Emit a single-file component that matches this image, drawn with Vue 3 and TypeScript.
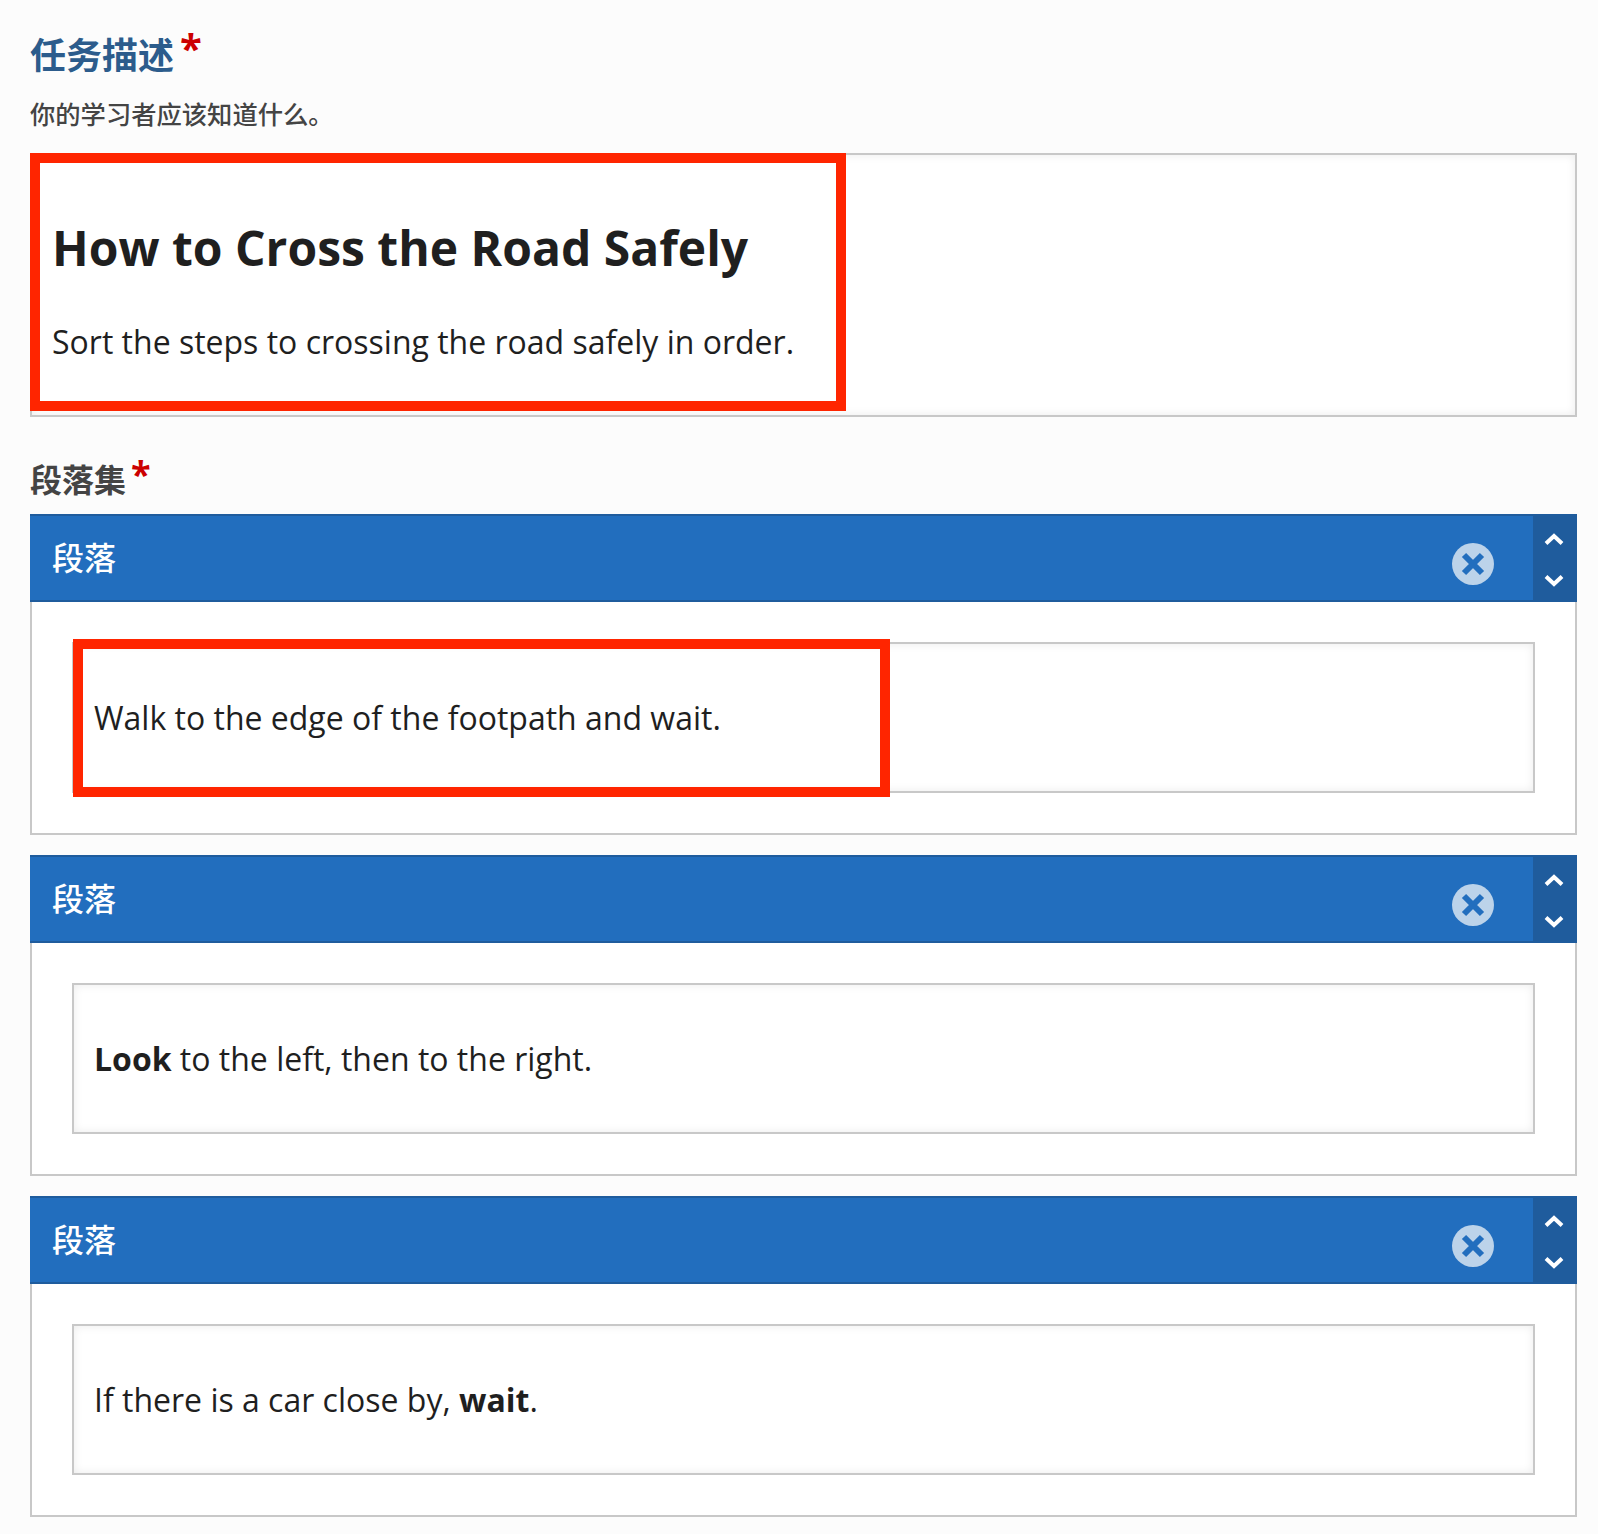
<script setup lang="ts">
interface Para { html: string; marked: boolean }
const items: Para[] = [
  { html: 'Walk to the edge of the footpath and wait.', marked: true },
  { html: '<strong>Look</strong> to the left, then to the right.', marked: false },
  { html: 'If there is a car close by, <strong>wait</strong>.', marked: false },
]
</script>

<template>
  <main class="page">
    <h2 class="title">任务描述<span class="req title-req">*</span></h2>
    <p class="desc">你的学习者应该知道什么。</p>
    <div class="editor main-editor">
      <div class="mark mark-main"></div>
      <h1 class="task">How to Cross the Road Safely</h1>
      <p class="body">Sort the steps to crossing the road safely in order.</p>
    </div>
    <h3 class="label">段落集<span class="req label-req">*</span></h3>
    <section class="list">
      <article v-for="(it, i) in items" :key="i" class="item">
        <header class="head">
          <span class="head-title">段落</span>
          <svg class="remove" viewBox="0 0 42 42" width="42" height="42" aria-hidden="true">
            <circle cx="21" cy="21" r="21" fill="#bcd3ea" />
            <path d="M12 12 30 30M30 12 12 30" stroke="#226ebe" stroke-width="6" fill="none" />
          </svg>
          <div class="order">
            <svg viewBox="0 0 20 12" width="20" height="12" aria-hidden="true"><path d="M2 10.5 10 3l8 7.5" stroke="#fff" stroke-width="4" fill="none" /></svg>
            <svg viewBox="0 0 20 12" width="20" height="12" aria-hidden="true"><path d="M2 1.5 10 9l8-7.5" stroke="#fff" stroke-width="4" fill="none" /></svg>
          </div>
        </header>
        <div class="item-body">
          <div class="editor para-editor">
            <div v-if="it.marked" class="mark mark-para"></div>
            <p class="body" v-html="it.html"></p>
          </div>
        </div>
      </article>
    </section>
  </main>
</template>

<style scoped>
.page {
  box-sizing: border-box;
  width: 1598px;
  height: 1534px;
  padding: 29px 21px 0 30px;
  background: #fcfcfc;
  font-family: "Open Sans", "Noto Sans CJK SC", sans-serif;
  color: #1f1f1f;
  overflow: hidden;
}
.title {
  margin: 0;
  font-size: 36px;
  line-height: 50px;
  font-weight: 700;
  color: #2c5c8c;
}
.req {
  color: #cc0000;
  font-weight: 700;
  position: relative;
}
.title-req {
  font-size: 40px;
  margin-left: 6px;
  top: -6px;
}
.label-req {
  font-size: 36px;
  margin-left: 5px;
  top: -5px;
}
.desc {
  margin: 16px 0 22px;
  font-size: 25.3px;
  line-height: 34px;
  font-weight: 500;
  color: #444;
}
.editor {
  position: relative;
  box-sizing: border-box;
  background: #fff;
  border: 2px solid #c8c8c8;
  box-shadow: inset 0 0 10px rgba(0, 0, 0, 0.08);
}
.main-editor {
  height: 264px;
  padding: 60px 20px 0;
}
.task {
  margin: 0 0 39px;
  font-size: 48px;
  line-height: 66px;
  font-weight: 700;
}
.body {
  margin: 0;
  font-size: 32px;
  line-height: 44px;
}
.mark {
  position: absolute;
  box-sizing: border-box;
  border: 10px solid #ff2500;
}
.mark-main {
  left: -2px;
  top: -2px;
  width: 816px;
  height: 258px;
}
.mark-para {
  left: -1px;
  top: -5px;
  width: 817px;
  height: 158px;
}
.label {
  margin: 27px 0 0;
  font-size: 32px;
  line-height: 69px;
  font-weight: 700;
  color: #444;
}
.list {
  display: flex;
  flex-direction: column;
  gap: 20px;
}
.item {
  height: 321px;
  box-sizing: border-box;
  display: flex;
  flex-direction: column;
  border: 2px solid #c8c8c8;
  border-top: 0;
  background: #fff;
}
.head {
  position: relative;
  flex: none;
  box-sizing: border-box;
  height: 88px;
  margin: 0 -2px;
  background: #226ebe;
  border-top: 2px solid #1f5c9d;
  border-bottom: 2px solid #1f5c9d;
  display: flex;
  align-items: center;
  padding-left: 22px;
}
.head-title {
  color: #fff;
  font-size: 32px;
  font-weight: 500;
  line-height: 44px;
}
.remove {
  position: absolute;
  right: 83px;
  top: 27px;
}
.order {
  position: absolute;
  right: 0;
  top: -2px;
  bottom: -2px;
  width: 44px;
  background: #1f5c9d;
  display: flex;
  flex-direction: column;
  align-items: center;
  justify-content: space-between;
  padding: 19px 2px 15px 0;
  box-sizing: border-box;
}
.item-body {
  flex: 1;
  padding: 40px 40px 0;
}
.para-editor {
  height: 151px;
  padding: 52px 20px 0;
}
</style>
